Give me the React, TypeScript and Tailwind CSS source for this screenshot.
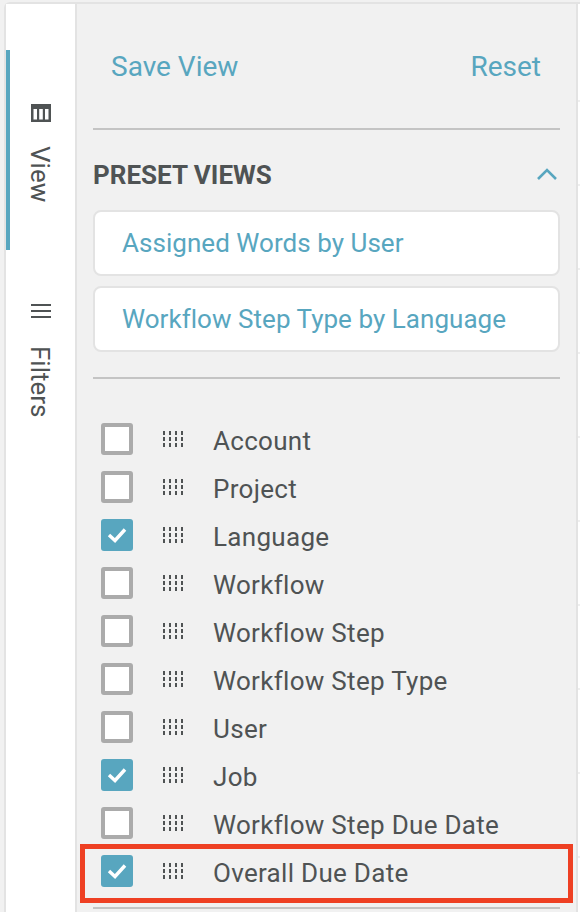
const FONT = "font-['Roboto','Liberation_Sans',sans-serif]";

const columns = [
  { name: "Account", checked: false },
  { name: "Project", checked: false },
  { name: "Language", checked: true },
  { name: "Workflow", checked: false },
  { name: "Workflow Step", checked: false },
  { name: "Workflow Step Type", checked: false },
  { name: "User", checked: false },
  { name: "Job", checked: true },
  { name: "Workflow Step Due Date", checked: false },
  { name: "Overall Due Date", checked: true },
];

function DragHandle() {
  return (
    <svg width="20" height="16" viewBox="0 0 20 16" className="block fill-[#4f5354]">
      {[0, 6, 12, 18].map((x) =>
        [0, 6, 12].map((y) => <rect key={`${x}-${y}`} x={x} y={y} width="2" height="4" />)
      )}
    </svg>
  );
}

function Checkbox({ checked }: { checked: boolean }) {
  if (checked) {
    return (
      <div className="flex h-8 w-8 shrink-0 items-center justify-center rounded-[3px] bg-[#58a6bf]">
        <svg width="20" height="16" viewBox="0 0 20 16" fill="none" stroke="white" strokeWidth="3.4">
          <path d="M2 8l6 5.500L18 2.500" />
        </svg>
      </div>
    );
  }
  return <div className="h-8 w-8 shrink-0 rounded-[3px] border-[4px] border-[#ababab] bg-white" />;
}

export default function App() {
  return (
    <div className={`relative flex h-[912px] w-[580px] overflow-hidden bg-[#f1f1f1] pl-[4px] pt-[2px] ${FONT}`}>
      <div className="flex flex-1 rounded-tl-[6px] border-l-2 border-t-2 border-[#e3e3e3]">
        {/* SIDE TABS */}
        <div className="box-content flex w-[69px] shrink-0 flex-col border-r-2 border-[#e3e3e3] bg-white pt-[46px] text-[#4f5354]">
          <div className="flex h-[200px] flex-col items-center border-l-4 border-[#58a6bf] pr-[4px] pt-[54px]">
            <svg width="20" height="18" viewBox="0 0 20 18" className="fill-[#4f5354]">
              <path d="M0 0h20v18H0zM2.500 5v10.500h3.500V5zM8.200 5v10.500h3.600V5zM14 5v10.500h3.500V5z" fillRule="evenodd" />
            </svg>
            <span className="mr-[2px] mt-[24px] text-[26px] leading-[30px] [writing-mode:vertical-rl]">View</span>
          </div>
          <div className="flex flex-col items-center pt-[54px]">
            <svg width="20" height="14" viewBox="0 0 20 14" className="fill-[#4f5354]">
              <rect width="20" height="2" />
              <rect y="6" width="20" height="2" />
              <rect y="12" width="20" height="2" />
            </svg>
            <span className="mr-[2px] mt-[28px] text-[26px] leading-[30px] [writing-mode:vertical-rl]">Filters</span>
          </div>
        </div>

        {/* PANEL */}
        <div className="flex flex-1 flex-col px-[16px]">
          <div className="flex h-[126px] items-start justify-between border-b-2 border-[#c4c4c4] pl-[18px] pr-[19px] pt-[46px] text-[28px] leading-[34px] text-[#58a6bf]">
            <span>Save View</span>
            <span>Reset</span>
          </div>
          <div className="flex h-[80px] items-center justify-between pt-[10px]">
            <h2 className="text-[26px] font-bold text-[#4f5354]">PRESET VIEWS</h2>
            <svg width="24" height="16" viewBox="0 0 24 16" fill="none" stroke="#58a6bf" strokeWidth="2.6" className="mr-[1px] -mt-[3px]">
              <path d="M3 13L12 4l9 9" />
            </svg>
          </div>
          <div className="flex flex-col gap-[10px] border-b-2 border-[#c4c4c4] pb-[25px]">
            {["Assigned Words by User", "Workflow Step Type by Language"].map((v) => (
              <div
                key={v}
                className="flex h-[66px] items-center rounded-[8px] border-2 border-[#e3e3e3] bg-white px-[27px] text-[26px] tracking-[0.04px] text-[#58a6bf]"
              >
                {v}
              </div>
            ))}
          </div>
          <div className="flex flex-col pt-[36px]">
            {columns.map((c) => (
              <div key={c.name} className="flex h-[48px] items-center pl-[8px] text-[26px] tracking-[0.3px] text-[#4f5354]">
                <Checkbox checked={c.checked} />
                <div className="mx-[30px]">
                  <DragHandle />
                </div>
                <span className="pt-[4px]">{c.name}</span>
              </div>
            ))}
          </div>
          <div className="mt-[12px] border-b-2 border-[#c4c4c4]" />
        </div>

        {/* EDGE OF THE TABLE BEHIND */}
        <div className="flex w-[4px] shrink-0 flex-col border-l-2 border-[#e3e3e3] bg-white">
          <div className="h-[98px] shrink-0 border-b-2 border-[#efefef]" />
          {[0, 1, 2, 3, 4, 5, 6, 7, 8].map((i) => (
            <div key={i} className="h-[84px] shrink-0 border-b-2 border-[#efefef]" />
          ))}
        </div>
      </div>

      {/* RED HIGHLIGHT */}
      <div className="absolute left-[80px] top-[844px] h-[59px] w-[493px] border-[5px] border-[#ee4023]" />
    </div>
  );
}
